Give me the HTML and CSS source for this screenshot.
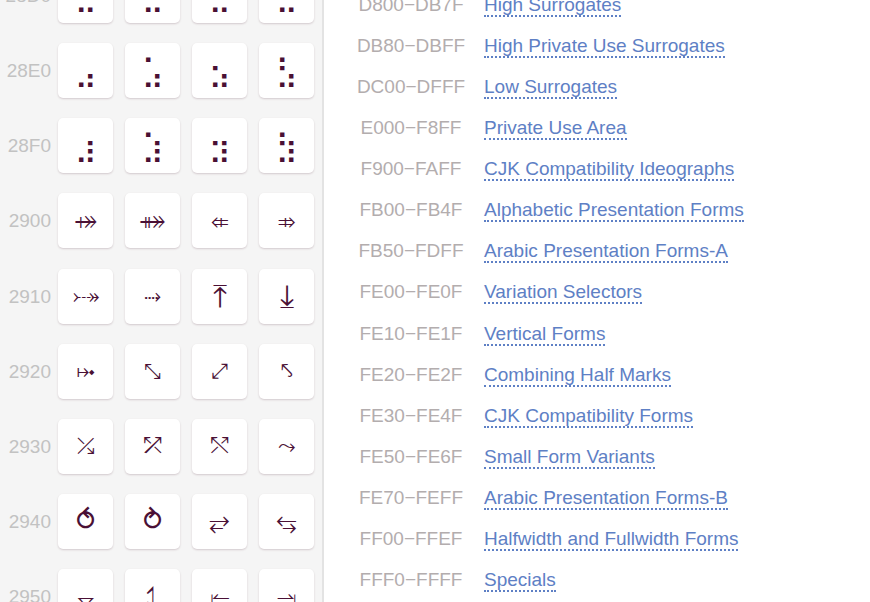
FILE: index.html
```html
<!DOCTYPE html>
<html>
<head>
<meta charset="utf-8">
<link rel="stylesheet" href="styles.css">
</head>
<body>
<div class="page">
  <div class="charpane">
    <div class="charrows">
      <div class="charrow"><div class="label">28D0</div><div class="cells"><div class="cell braille">⣐</div><div class="cell braille">⣑</div><div class="cell braille">⣒</div><div class="cell braille">⣓</div></div></div>
      <div class="charrow"><div class="label">28E0</div><div class="cells"><div class="cell braille">⣠</div><div class="cell braille">⣡</div><div class="cell braille">⣢</div><div class="cell braille">⣣</div></div></div>
      <div class="charrow"><div class="label">28F0</div><div class="cells"><div class="cell braille">⣰</div><div class="cell braille">⣱</div><div class="cell braille">⣲</div><div class="cell braille">⣳</div></div></div>
      <div class="charrow"><div class="label">2900</div><div class="cells"><div class="cell">⤀</div><div class="cell">⤁</div><div class="cell">⤂</div><div class="cell">⤃</div></div></div>
      <div class="charrow"><div class="label">2910</div><div class="cells"><div class="cell">⤐</div><div class="cell">⤑</div><div class="cell tall">⤒</div><div class="cell tall">⤓</div></div></div>
      <div class="charrow"><div class="label">2920</div><div class="cells"><div class="cell">⤠</div><div class="cell diag">⤡</div><div class="cell diag">⤢</div><div class="cell diag">⤣</div></div></div>
      <div class="charrow"><div class="label">2930</div><div class="cells"><div class="cell">⤰</div><div class="cell">⤱</div><div class="cell">⤲</div><div class="cell">⤳</div></div></div>
      <div class="charrow"><div class="label">2940</div><div class="cells"><div class="cell circle">⥀</div><div class="cell circle">⥁</div><div class="cell wide">⥂</div><div class="cell wide">⥃</div></div></div>
      <div class="charrow"><div class="label">2950</div><div class="cells"><div class="cell">⥐</div><div class="cell tall">⥑</div><div class="cell">⥒</div><div class="cell">⥓</div></div></div>
    </div>
  </div>
  <div class="blockpane">
    <div class="blocks">
      <div class="block"><span class="range">D800−DB7F</span><span class="name"><a class="link">High Surrogates</a></span></div>
      <div class="block"><span class="range">DB80−DBFF</span><span class="name"><a class="link">High Private Use Surrogates</a></span></div>
      <div class="block"><span class="range">DC00−DFFF</span><span class="name"><a class="link">Low Surrogates</a></span></div>
      <div class="block"><span class="range">E000−F8FF</span><span class="name"><a class="link">Private Use Area</a></span></div>
      <div class="block"><span class="range">F900−FAFF</span><span class="name"><a class="link">CJK Compatibility Ideographs</a></span></div>
      <div class="block"><span class="range">FB00−FB4F</span><span class="name"><a class="link">Alphabetic Presentation Forms</a></span></div>
      <div class="block"><span class="range">FB50−FDFF</span><span class="name"><a class="link">Arabic Presentation Forms-A</a></span></div>
      <div class="block"><span class="range">FE00−FE0F</span><span class="name"><a class="link">Variation Selectors</a></span></div>
      <div class="block"><span class="range">FE10−FE1F</span><span class="name"><a class="link">Vertical Forms</a></span></div>
      <div class="block"><span class="range">FE20−FE2F</span><span class="name"><a class="link">Combining Half Marks</a></span></div>
      <div class="block"><span class="range">FE30−FE4F</span><span class="name"><a class="link">CJK Compatibility Forms</a></span></div>
      <div class="block"><span class="range">FE50−FE6F</span><span class="name"><a class="link">Small Form Variants</a></span></div>
      <div class="block"><span class="range">FE70−FEFF</span><span class="name"><a class="link">Arabic Presentation Forms-B</a></span></div>
      <div class="block"><span class="range">FF00−FFEF</span><span class="name"><a class="link">Halfwidth and Fullwidth Forms</a></span></div>
      <div class="block"><span class="range">FFF0−FFFF</span><span class="name"><a class="link">Specials</a></span></div>
    </div>
  </div>
</div>
</body>
</html>
```

FILE: styles.css
```css
html, body {
  margin: 0;
  padding: 0;
  background: #ffffff;
}
body {
  font-family: "Liberation Sans", Arial, sans-serif;
}
.page {
  display: flex;
  width: 870px;
  height: 602px;
  overflow: hidden;
}
.charpane {
  width: 322px;
  flex: none;
  background: #f5f5f5;
  border-right: 2px solid #e3e3e3;
  overflow: hidden;
}
.charrows {
  display: flex;
  flex-direction: column;
  row-gap: 20.14px;
  margin-top: -32px;
}
.charrow {
  display: flex;
  align-items: center;
  height: 55px;
}
.label {
  width: 51px;
  text-align: right;
  font-size: 19px;
  color: #c2c2c2;
  line-height: 55px;
}
.cells {
  display: flex;
  column-gap: 12px;
  margin-left: 7px;
}
.cell {
  width: 55px;
  height: 55px;
  background: #ffffff;
  border-radius: 5px;
  box-shadow: 0 1px 2px rgba(90, 50, 70, 0.22);
  display: flex;
  align-items: center;
  justify-content: center;
  font-family: "DejaVu Sans", sans-serif;
  font-size: 22px;
  line-height: 1;
  color: #4a1035;
  overflow: hidden;
}
.cell.braille {
  font-size: 30px;
}
.cell.tall {
  font-size: 32px;
}
.cell.diag {
  font-size: 21px;
}
.cell.circle {
  font-size: 28px;
}
.cell.wide {
  font-size: 26px;
}
.blockpane {
  flex: 1;
  padding-left: 14px;
  overflow: hidden;
}
.blocks {
  margin-top: -16px;
}
.block {
  display: grid;
  grid-template-columns: 146px auto;
  height: 41.07px;
  line-height: 41.07px;
  font-size: 19px;
  white-space: nowrap;
}
.range {
  text-align: center;
  color: #b3adae;
}
.link {
  color: #5e80c5;
  border-bottom: 2px dotted #5e80c5;
  text-decoration: none;
}
```
